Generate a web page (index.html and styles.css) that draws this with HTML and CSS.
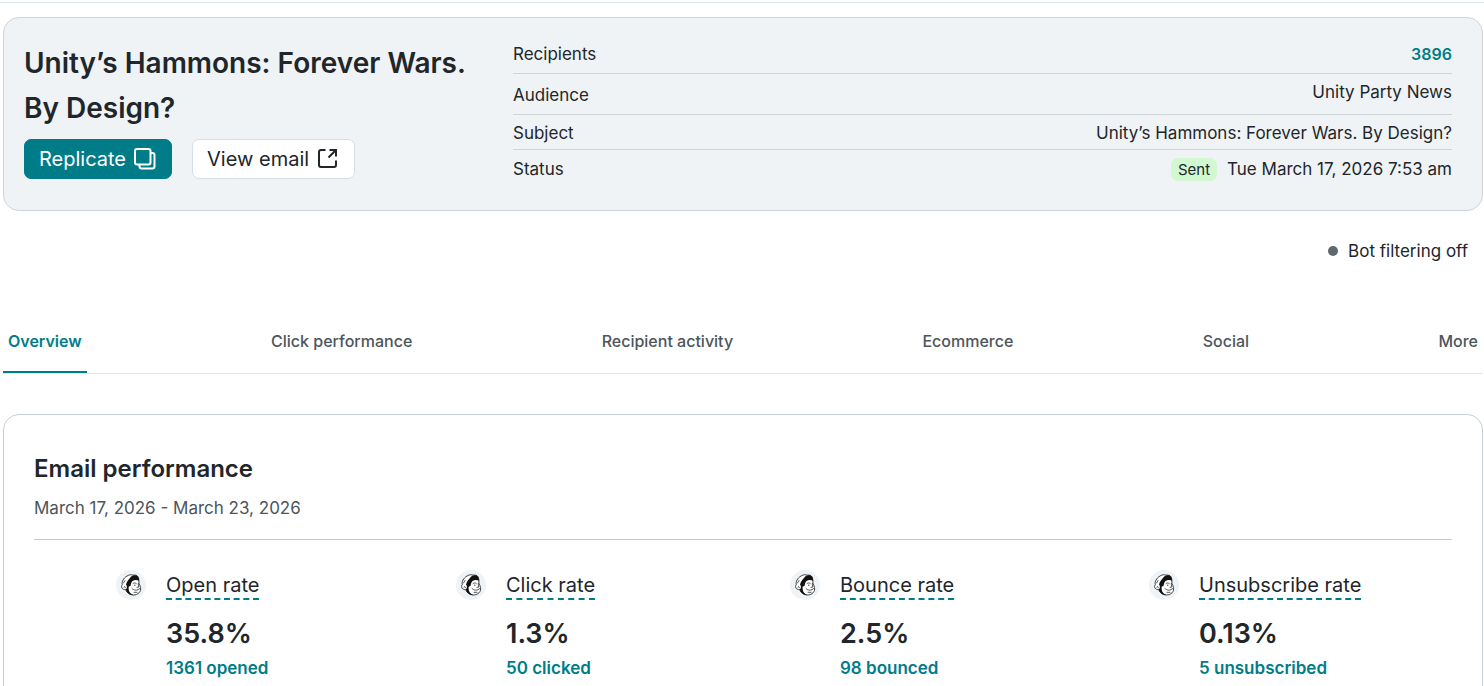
FILE: index.html
```html
<!DOCTYPE html>
<html lang="en">
<head>
    <meta charset="UTF-8">
    <meta name="viewport" content="width=device-width, initial-scale=1.0">
    <link rel="stylesheet" href="styles.css">
    <title>Campaign report</title>
</head>
<body>
    <!-- Shared icon for the stats -->
    <svg class="sprite" aria-hidden="true">
        <symbol id="freddie" viewBox="0 0 30 30">
            <circle cx="15" cy="15" r="15" fill="#eff3f6"/>
            <path d="M9.500 19.500C6.500 20 4.500 17 6.300 14.500C5.500 12 7.500 8 11 6C13.500 4.500 15.500 4.500 17 5.200C20 4.500 23 6 22.800 10.500L23 14C24.500 15.500 24 16.500 24.500 17.500C25.500 21.500 22 25 17.500 25C13.500 25 10.500 22.500 9.500 19.500Z" fill="#fff" stroke="#111" stroke-width="0.800"/>
            <path d="M10 14.500C10.800 11.500 13 9 15 6.800C17 5 21.500 4.500 22.500 7.500L23.300 10.800C21 9.800 18.500 9.800 16.500 11C15 12.500 15 14 14.500 16L12.800 16.500C12.300 18 12.800 20 13.200 21.500C14 23 15.500 24.200 17.500 25.200C13.500 25.200 10.500 22.500 9.800 19.500C11 18.500 11.500 16 10 14.500Z" fill="#111"/>
            <path d="M8 17C8.500 16 9.500 16.500 9.300 17.800M7.500 13L9 10.500" fill="none" stroke="#111" stroke-width="0.700" stroke-linecap="round"/>
            <path d="M17 13.500C18 12.700 19.500 12.800 20.300 13.500M22.300 13.500V15L23 17L21 17.300M16 18.500C18 20.800 21.500 20.800 23.800 18.500M18 22.300H21" fill="none" stroke="#111" stroke-width="0.700" stroke-linecap="round"/>
            <circle cx="18.800" cy="15.200" r="0.600" fill="#111"/>
        </symbol>
    </svg>

    <div class="container">
        <!-- Campaign summary -->
        <header class="summary">
            <div class="summary-main">
                <h1>Unity’s Hammons: Forever Wars. By Design?</h1>
                <div class="actions">
                    <button type="button" class="btn btn-primary">
                        Replicate
                        <svg class="icon" viewBox="0 0 24 24" fill="none" stroke="currentColor" stroke-width="2" aria-hidden="true">
                            <rect x="2" y="2" width="15.500" height="15.500" rx="2"/>
                            <path d="M17.500 6H19.500A2 2 0 0 1 21.500 8V19.500A2 2 0 0 1 19.500 21.500H8.500A2 2 0 0 1 6.500 19.500V17.500"/>
                        </svg>
                    </button>
                    <button type="button" class="btn">
                        View email
                        <svg class="icon" viewBox="0 0 24 24" fill="none" stroke="currentColor" stroke-width="2" aria-hidden="true">
                            <path d="M9.500 3H5A2 2 0 0 0 3 5V18A2 2 0 0 0 5 20H18A2 2 0 0 0 20 18V13.500M12.500 10.500L19.500 3.500M13.500 3H20V9.500"/>
                        </svg>
                    </button>
                </div>
            </div>
            <dl class="details">
                <div class="row row-tall">
                    <dt>Recipients</dt>
                    <dd><a href="#recipients" class="link">3896</a></dd>
                </div>
                <div class="row row-audience">
                    <dt>Audience</dt>
                    <dd>Unity Party News</dd>
                </div>
                <div class="row">
                    <dt>Subject</dt>
                    <dd>Unity’s Hammons: Forever Wars. By Design?</dd>
                </div>
                <div class="row">
                    <dt>Status</dt>
                    <dd><span class="badge">Sent</span>Tue March 17, 2026 7:53 am</dd>
                </div>
            </dl>
        </header>

        <p class="bot-status"><span class="dot"></span>Bot filtering off</p>

        <!-- Tabs -->
        <nav class="tabs">
            <a href="#overview" class="current">Overview</a>
            <a href="#clicks">Click performance</a>
            <a href="#activity">Recipient activity</a>
            <a href="#ecommerce">Ecommerce</a>
            <a href="#social">Social</a>
            <a href="#more">More</a>
        </nav>

        <!-- Email performance -->
        <section class="performance">
            <h2>Email performance</h2>
            <p class="dates">March 17, 2026 - March 23, 2026</p>
            <div class="stats">
                <div class="stat">
                    <svg class="freddie" aria-hidden="true"><use href="#freddie"/></svg>
                    <div>
                        <h3>Open rate</h3>
                        <p class="value">35.8%</p>
                        <a href="#opened" class="link">1361 opened</a>
                    </div>
                </div>
                <div class="stat">
                    <svg class="freddie" aria-hidden="true"><use href="#freddie"/></svg>
                    <div>
                        <h3>Click rate</h3>
                        <p class="value">1.3%</p>
                        <a href="#clicked" class="link">50 clicked</a>
                    </div>
                </div>
                <div class="stat">
                    <svg class="freddie" aria-hidden="true"><use href="#freddie"/></svg>
                    <div>
                        <h3>Bounce rate</h3>
                        <p class="value">2.5%</p>
                        <a href="#bounced" class="link">98 bounced</a>
                    </div>
                </div>
                <div class="stat">
                    <svg class="freddie" aria-hidden="true"><use href="#freddie"/></svg>
                    <div>
                        <h3>Unsubscribe rate</h3>
                        <p class="value">0.13%</p>
                        <a href="#unsubscribed" class="link">5 unsubscribed</a>
                    </div>
                </div>
            </div>
        </section>
    </div>
</body>
</html>
```

FILE: styles.css
```css
* {
    box-sizing: border-box;
}
body {
    font-family: Inter, 'Liberation Sans', sans-serif;
    font-size: 17px;
    line-height: 24px;
    margin: 0;
    background: #fff;
    color: #21262a;
    overflow: hidden;
}
h1, h2, h3, p, dl, dd {
    margin: 0;
}
.sprite {
    display: none;
}
.container {
    margin-top: 2px;
    padding: 14px 1px 0 3px;
    border-top: 1px solid #dfe7ec;
}

/* Campaign summary */
.summary {
    display: flex;
    gap: 40px;
    padding: 22px 30px 24px 20px;
    background: #eff3f6;
    border: 1px solid #cfd4d8;
    border-radius: 16px;
}
.summary-main {
    flex: 0 0 449px;
    padding-top: 1px;
}
h1 {
    font-size: 28px;
    font-weight: 600;
    line-height: 45px;
}
.actions {
    display: flex;
    gap: 20px;
    margin-top: 8px;
}
.btn {
    display: flex;
    align-items: center;
    gap: 7px;
    height: 40px;
    padding: 0 14px;
    font: inherit;
    font-size: 20px;
    color: #21262a;
    background: #fff;
    border: 1px solid #d5dfe5;
    border-radius: 7px;
    cursor: pointer;
}
.btn-primary {
    color: #fff;
    background: #007c89;
    border-color: #007c89;
}
.icon {
    width: 24px;
    height: 24px;
}
.details {
    flex: 1;
}
.row {
    display: flex;
    justify-content: space-between;
    align-items: center;
    height: 35px;
    padding-top: 1px;
    border-bottom: 1px solid #cfd4d8;
}
.row-tall {
    height: 34px;
    padding-bottom: 6px;
}
.row-audience {
    height: 41px;
}
.row-audience dd {
    padding-bottom: 6px;
}
.row:last-child {
    height: 36px;
    border-bottom: none;
}
.badge {
    display: inline-block;
    margin-right: 10px;
    padding: 0 7px;
    font-size: 15px;
    line-height: 23px;
    background: #d2f8d2;
    border-radius: 7px;
}
.link {
    font-size: 16px;
    font-weight: 600;
    color: #007c89;
    text-decoration: none;
}
.bot-status {
    display: flex;
    justify-content: flex-end;
    align-items: center;
    gap: 10px;
    padding: 28px 15px 0 0;
}
.dot {
    width: 10px;
    height: 10px;
    border-radius: 50%;
    background: #5d686f;
}

/* Tabs */
.tabs {
    display: flex;
    justify-content: space-between;
    margin-top: 66px;
    border-bottom: 1px solid #dfe5e8;
}
.tabs a {
    padding: 0 5px 18px;
    font-size: 16px;
    font-weight: 500;
    color: #4c555b;
    text-decoration: none;
    border-bottom: 2px solid transparent;
}
.tabs .current {
    font-weight: 600;
    color: #007c89;
    border-bottom-color: #007c89;
}

/* Email performance */
.performance {
    margin-top: 40px;
    padding: 38px 30px;
    border: 1px solid #c5d0d6;
    border-radius: 16px;
}
h2 {
    font-size: 24px;
    font-weight: 600;
    line-height: 32px;
}
.dates {
    margin-top: 11px;
    color: #4c555b;
}
.stats {
    display: grid;
    grid-template-columns: 340fr 334fr 359fr 303fr;
    margin-top: 19px;
    padding: 30px 0 0 82px;
    border-top: 1px solid #c5ccd1;
}
.stat {
    display: flex;
    gap: 20px;
}
.stat .link {
    font-size: 17px;
}
.freddie {
    width: 30px;
    height: 30px;
}
h3 {
    display: inline-block;
    padding-top: 2px;
    font-size: 20px;
    font-weight: 400;
    line-height: 26px;
    border-bottom: 2px dashed #007c89;
}
.value {
    margin-top: 12px;
    font-size: 27px;
    font-weight: 600;
    line-height: 44px;
}
```
